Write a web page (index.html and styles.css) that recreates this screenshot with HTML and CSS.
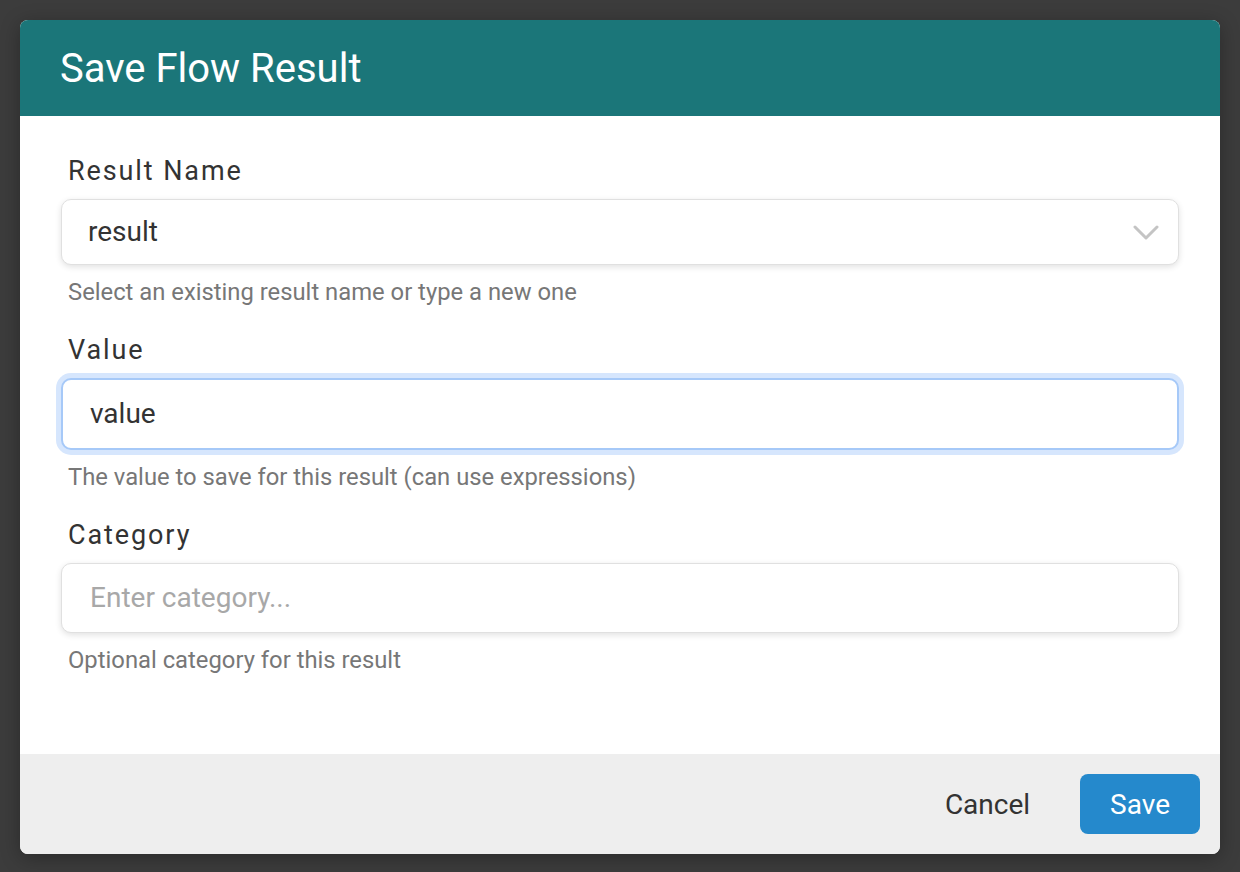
FILE: index.html
```html
<!DOCTYPE html>
<html lang="en">
<head>
<meta charset="utf-8">
<title>Save Flow Result</title>
<link rel="stylesheet" href="styles.css">
</head>
<body>
<div class="dialog">
  <header class="dialog-header">
    <h1 class="dialog-title">Save Flow Result</h1>
  </header>
  <main class="dialog-body">
    <div class="field">
      <label class="field-label">Result Name</label>
      <div class="select">
        <span class="select-value">result</span>
        <svg class="chevron" width="26" height="16" viewBox="0 0 26 16"><path d="M2 2 L13 13 L24 2" fill="none" stroke="#c4c4c4" stroke-width="3" stroke-linecap="round" stroke-linejoin="round"/></svg>
      </div>
      <div class="field-help">Select an existing result name or type a new one</div>
    </div>
    <div class="field">
      <label class="field-label">Value</label>
      <div class="input focused">value</div>
      <div class="field-help">The value to save for this result (can use expressions)</div>
    </div>
    <div class="field">
      <label class="field-label">Category</label>
      <div class="input placeholder">Enter category...</div>
      <div class="field-help">Optional category for this result</div>
    </div>
  </main>
  <footer class="dialog-footer">
    <button class="btn btn-cancel">Cancel</button>
    <button class="btn btn-save">Save</button>
  </footer>
</div>
</body>
</html>
```
FILE: styles.css
```css
* { box-sizing: border-box; }
html, body { margin: 0; }
body {
  background: #3c3c3c;
  padding: 20px;
  font-family: Roboto, "Noto Sans", sans-serif;
  height: 872px;
}
.dialog {
  width: 1200px;
  height: 834px;
  background: #fff;
  border-radius: 8px;
  overflow: hidden;
  display: flex;
  flex-direction: column;
  box-shadow: 0 4px 20px rgba(0,0,0,0.3);
}
.dialog-header {
  height: 96px;
  background: #1b7679;
  display: flex;
  align-items: center;
  padding: 2px 40px 0;
}
.dialog-title {
  margin: 0;
  color: #fff;
  font-size: 40px;
  font-weight: 400;
  line-height: 48px;
}
.dialog-body {
  flex: 1;
  padding: 40px 41px 0;
  display: flex;
  flex-direction: column;
  gap: 28px;
}
.field { display: flex; flex-direction: column; }
.field-label {
  font-size: 27px;
  line-height: 30px;
  color: #333;
  letter-spacing: 1.9px;
  padding-left: 7px;
  margin-bottom: 13px;
}
.select, .input {
  width: 100%;
  border: 1px solid #e0e0e0;
  border-radius: 10px;
  background: #fff;
  box-shadow: 0 2px 6px rgba(0,0,0,0.12);
  font-size: 28px;
  color: #333;
  display: flex;
  align-items: center;
}
.select {
  height: 66px;
  padding: 0 19px 0 26px;
  justify-content: space-between;
}
.select-value { line-height: 1; }
.chevron { display: block; margin-top: 2px; }
.input {
  height: 70px;
  padding: 0 28px;
}
.input.focused {
  height: 72px;
  border: 2px solid #a6c9f8;
  box-shadow: 0 0 0 5px #d6e6fd;
  padding: 0 27px 2px;
}
.input.placeholder { color: #a8a8a8; padding-bottom: 2px; }
.field-help {
  margin-top: 12px;
  font-size: 23.8px;
  line-height: 30px;
  color: #777;
  padding-left: 7px;
}
.dialog-footer {
  height: 100px;
  background: #eeeeee;
  display: flex;
  justify-content: flex-end;
  align-items: center;
  gap: 20px;
  padding: 0 20px;
}
.btn {
  font-family: Roboto, "Noto Sans", sans-serif;
  font-size: 28px;
  height: 60px;
  padding: 0 30px;
  border: none;
  border-radius: 8px;
  background: transparent;
  cursor: pointer;
}
.btn-cancel { color: #333; }
.btn-save { background: #2589cc; color: #fff; }
```
